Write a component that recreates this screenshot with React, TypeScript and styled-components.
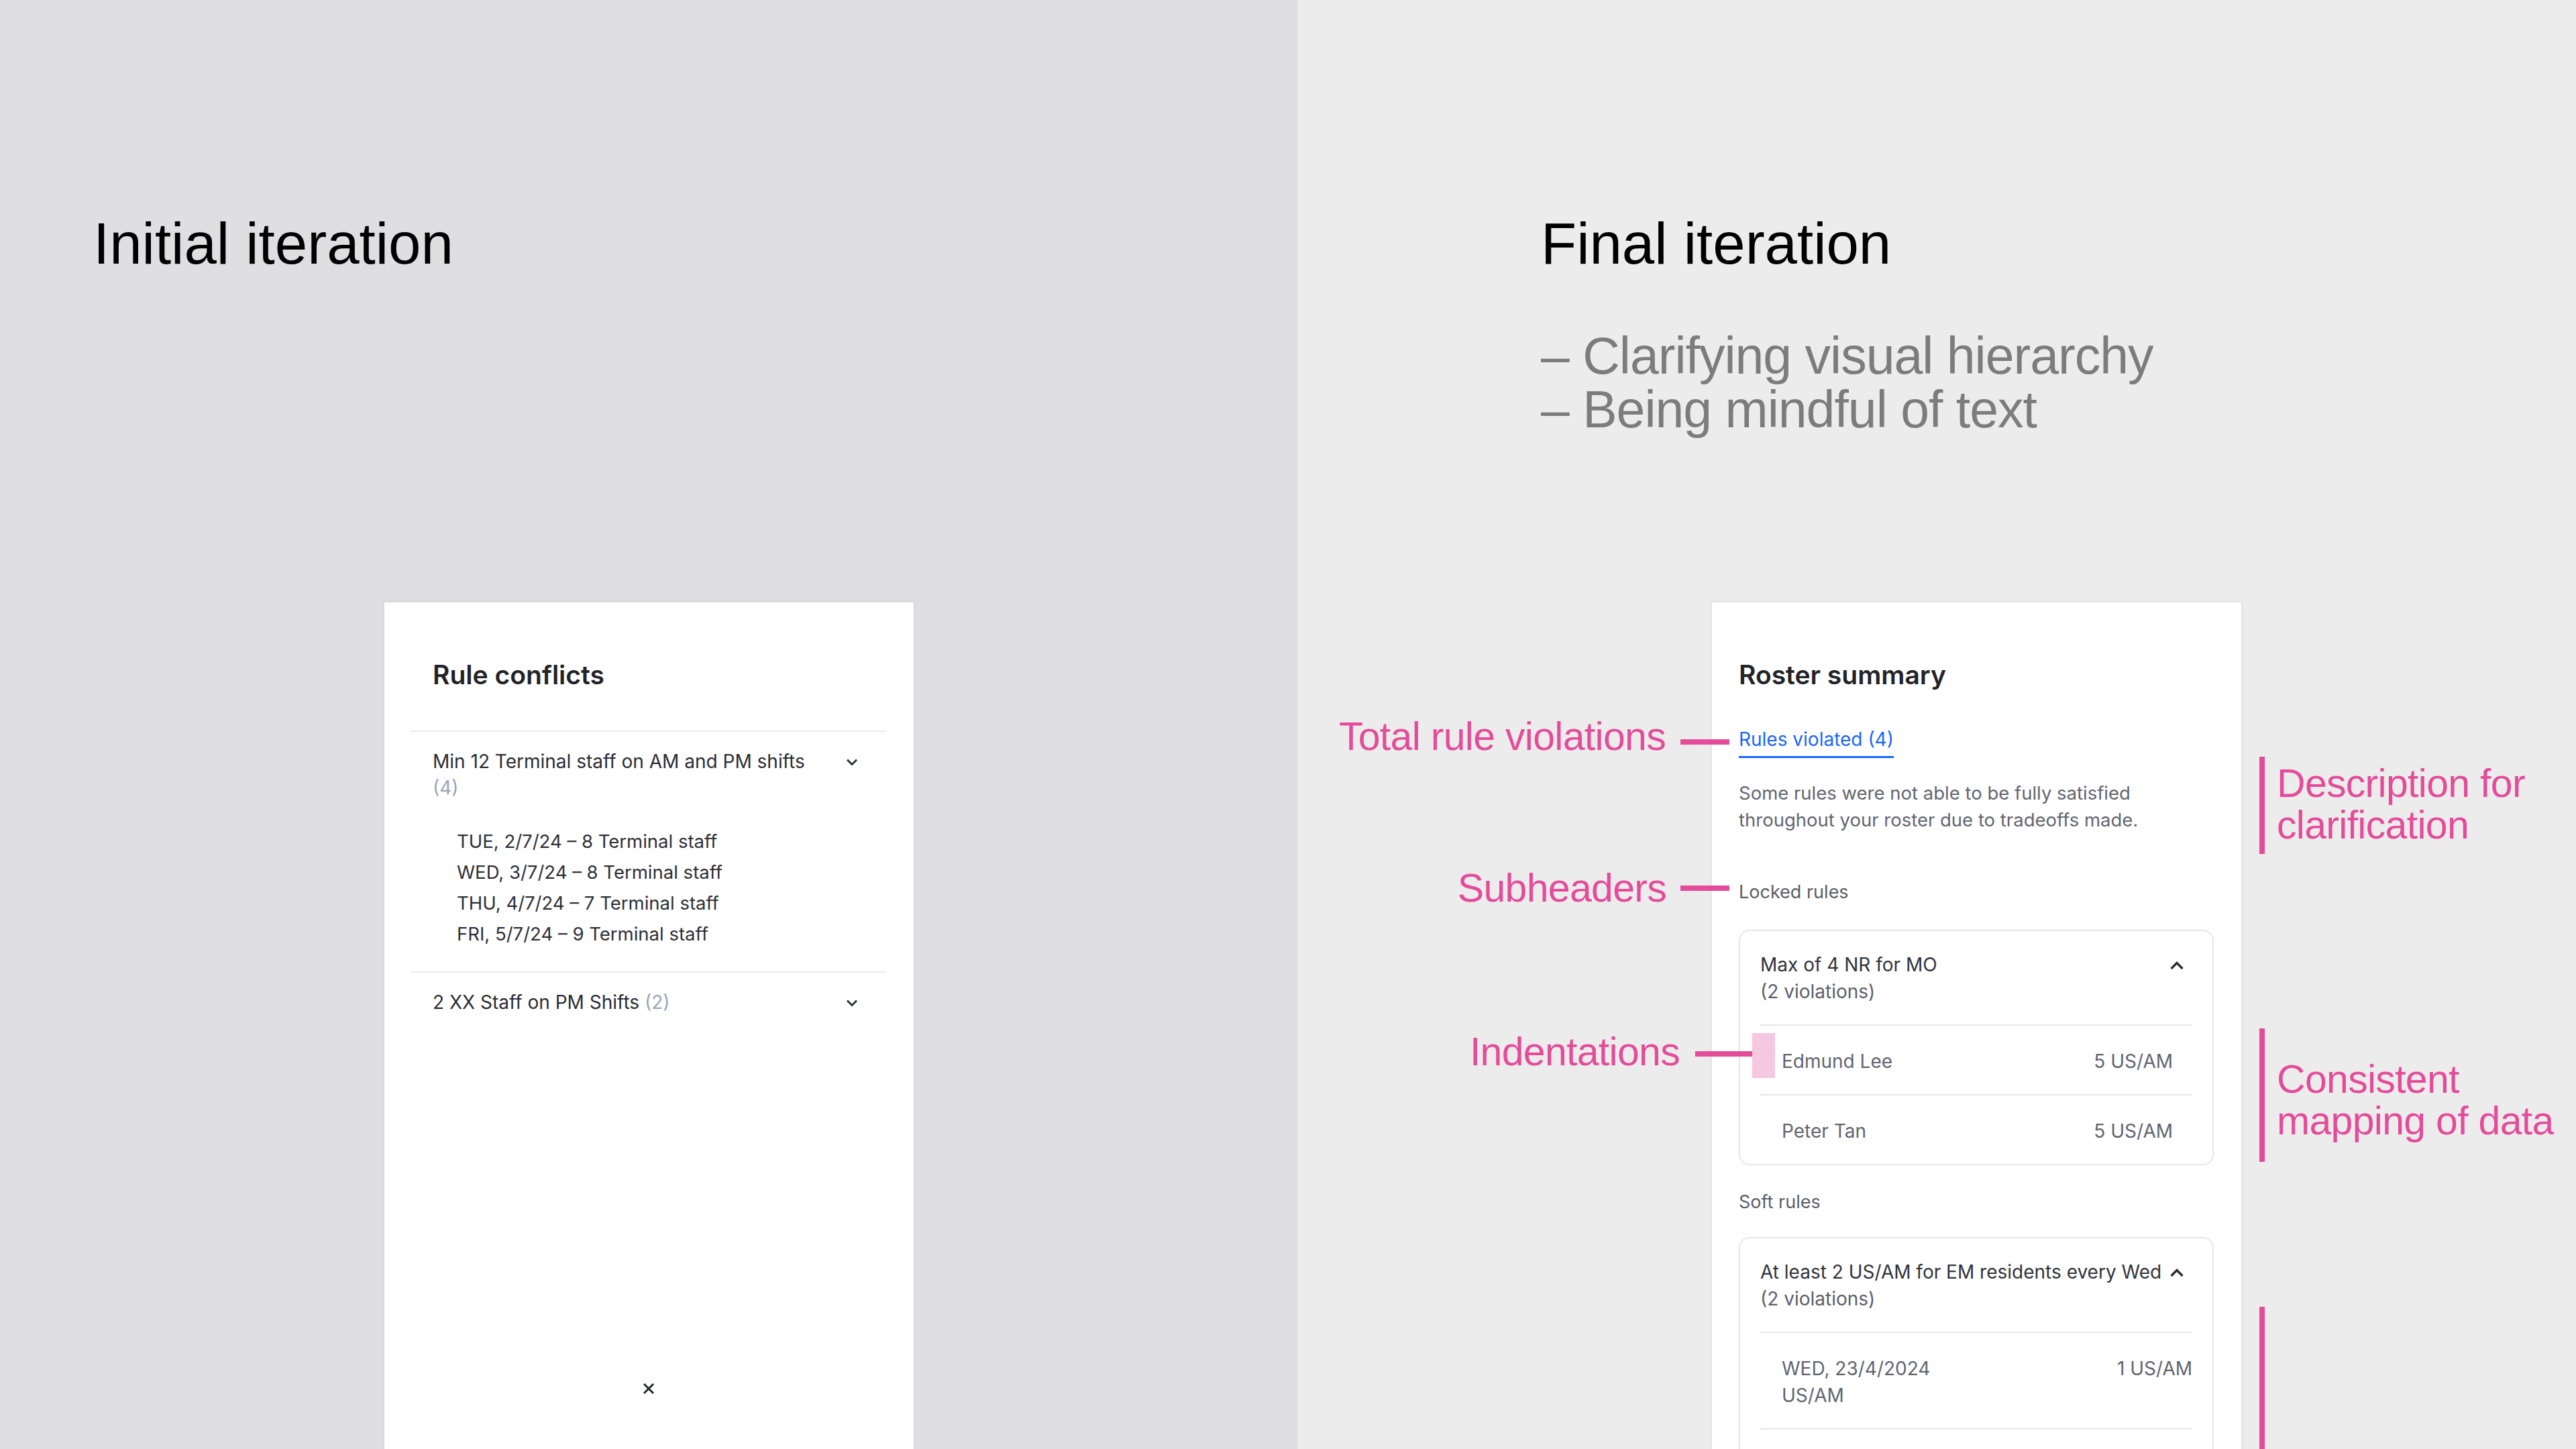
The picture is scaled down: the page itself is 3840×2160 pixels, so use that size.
import React from "react";
import styled, { createGlobalStyle } from "styled-components";

const GlobalStyle = createGlobalStyle`
  html, body { margin: 0; padding: 0; }
  body { background: #ececec; }
  * { box-sizing: border-box; }
`;

const PINK = "#e44c9a";

const Canvas = styled.div`
  width: 3840px;
  height: 2160px;
  display: flex;
  overflow: hidden;
  font-family: "Liberation Sans", Arial, sans-serif;
`;

const Panel = styled.section<{ $bg: string; $width?: number; $padLeft: number }>`
  flex: ${(p) => (p.$width ? `0 0 ${p.$width}px` : "1 1 auto")};
  background: ${(p) => p.$bg};
  padding: 319px 0 0 ${(p) => p.$padLeft}px;
  display: flex;
  flex-direction: column;
  align-items: flex-start;
  min-width: 0;
`;

const SlideTitle = styled.h1`
  margin: 0;
  font-weight: 400;
  font-size: 87px;
  line-height: 87px;
  color: #000;
  white-space: nowrap;
`;

const Takeaways = styled.ul`
  list-style: none;
  margin: 84px 0 0;
  padding: 0;
  font-size: 77px;
  line-height: 80px;
  letter-spacing: -1px;
  color: #7c7c7c;
  white-space: nowrap;
`;

const Stage = styled.div<{ $top: number; $left: number }>`
  position: relative;
  margin-top: ${(p) => p.$top}px;
  margin-left: ${(p) => p.$left}px;
`;

const Card = styled.div<{ $padLeft: number; $padRight: number }>`
  width: 789px;
  height: 1330px;
  background: #fff;
  box-shadow: 0 0 5px rgba(0, 0, 0, 0.09);
  padding: 84px ${(p) => p.$padRight}px 0 ${(p) => p.$padLeft}px;
  display: flex;
  flex-direction: column;
  font-family: Inter, "Noto Sans", sans-serif;
`;

const CardTitle = styled.h2<{ $indent: number }>`
  margin: 0;
  padding-left: ${(p) => p.$indent}px;
  font-size: 39px;
  line-height: 47px;
  font-weight: 600;
  color: #222428;
`;

/* ---------- Initial iteration (accordion) ---------- */

const Accordion = styled.div`
  margin-top: 60px;
  display: flex;
  flex-direction: column;
`;

const AccordionItem = styled.div<{ $padBottom: number }>`
  border-top: 2px solid #ececee;
  padding-bottom: ${(p) => p.$padBottom}px;
`;

const ItemHeader = styled.div`
  display: flex;
  align-items: flex-start;
  gap: 40px;
  padding: 25px 42px 0 33px;
`;

const ItemTitle = styled.div`
  flex: 1 1 auto;
  min-width: 0;
  font-size: 28px;
  line-height: 39px;
  color: #2a2d33;
`;

const Count = styled.span`
  color: #9ba4b9;
`;

const SubList = styled.ul`
  list-style: none;
  margin: 37px 0 0;
  padding: 0 0 0 69px;
  font-size: 27.5px;
  line-height: 46px;
  color: #2d3036;
`;

const Footer = styled.div`
  margin-top: auto;
  display: flex;
  justify-content: center;
  padding-bottom: 148px;
`;

const Chevron = styled.svg<{ $mt: number; $mr: number }>`
  flex: 0 0 auto;
  margin-top: ${(p) => p.$mt}px;
  margin-right: ${(p) => p.$mr}px;
  display: block;
`;

const ChevronDown = () => (
  <Chevron $mt={14} $mr={0} width="18" height="12" viewBox="0 0 18 12">
    <polyline points="2,2.5 9,9.5 16,2.5" fill="none" stroke="#2f3238" strokeWidth="3" strokeLinejoin="miter" />
  </Chevron>
);

const ChevronUp = () => (
  <Chevron $mt={14} $mr={12} width="22" height="14" viewBox="0 0 22 14">
    <polyline points="2.5,12 11,3.5 19.5,12" fill="none" stroke="#2a2d33" strokeWidth="3.4" strokeLinejoin="miter" />
  </Chevron>
);

const CloseIcon = () => (
  <svg width="20" height="20" viewBox="0 0 20 20">
    <path d="M3 3 L17 17 M17 3 L3 17" stroke="#25272b" strokeWidth="3" />
  </svg>
);

/* ---------- Final iteration (summary) ---------- */

const Tab = styled.div`
  align-self: flex-start;
  margin-top: 53px;
  font-size: 28px;
  line-height: 40px;
  color: #1766ff;
  padding-bottom: 5px;
  border-bottom: 3px solid #1766ff;
`;

const Description = styled.p`
  margin: 32px 0 0;
  max-width: 660px;
  font-size: 27.5px;
  line-height: 40px;
  color: #62666e;
`;

const SectionLabel = styled.div<{ $gap: number }>`
  margin-top: ${(p) => p.$gap}px;
  font-size: 27px;
  line-height: 40px;
  color: #5a5e66;
`;

const RuleBox = styled.div<{ $gap: number }>`
  margin-top: ${(p) => p.$gap}px;
  border: 2px solid #e7e7e9;
  border-radius: 16px;
  padding: 0 30px;
`;

const BoxHeader = styled.div`
  display: flex;
  align-items: flex-start;
  justify-content: space-between;
  gap: 12px;
  padding: 30px 0 29px;
`;

const RuleName = styled.div`
  font-size: 28px;
  line-height: 40px;
  color: #2f333b;
  white-space: nowrap;
`;

const Violations = styled.div`
  font-size: 28px;
  line-height: 40px;
  color: #5b606a;
`;

const Row = styled.div<{ $padRight: number }>`
  display: flex;
  justify-content: space-between;
  align-items: flex-start;
  border-top: 2px solid #e7e7e9;
  padding: 33px ${(p) => p.$padRight}px 29px 32px;
  font-size: 28px;
  line-height: 40px;
  color: #5f6570;
`;

const RowLabel = styled.span`
  max-width: 300px;
`;

const RowValue = styled.span`
  white-space: nowrap;
`;

/* ---------- Annotations ---------- */

const LeftCallout = styled.div<{ $top: number; $anchor: number; $gap: number }>`
  position: absolute;
  top: ${(p) => p.$top}px;
  right: calc(100% - ${(p) => p.$anchor}px);
  display: flex;
  align-items: flex-start;
  gap: ${(p) => p.$gap}px;
`;

const CalloutText = styled.div<{ $mt?: number }>`
  margin-top: ${(p) => p.$mt ?? 0}px;
  font-family: "Liberation Sans", Arial, sans-serif;
  font-size: 59px;
  line-height: 58px;
  letter-spacing: -0.7px;
  color: ${PINK};
  white-space: nowrap;
`;

const CalloutLine = styled.div<{ $width: number; $mt: number }>`
  flex: 0 0 auto;
  width: ${(p) => p.$width}px;
  height: 8px;
  margin-top: ${(p) => p.$mt}px;
  background: ${PINK};
`;

const IndentMarker = styled.div`
  position: absolute;
  left: 60px;
  top: 642px;
  width: 34px;
  height: 67px;
  background: #f5c7e1;
`;

const RightNote = styled.div<{ $top: number }>`
  position: absolute;
  top: ${(p) => p.$top}px;
  left: 816px;
  display: flex;
  align-items: flex-start;
  gap: 18px;
`;

const NoteBar = styled.div<{ $height: number }>`
  flex: 0 0 auto;
  width: 8px;
  height: ${(p) => p.$height}px;
  background: ${PINK};
`;

const NoteText = styled(CalloutText)`
  line-height: 62px;
`;

const conflicts = [
  "TUE, 2/7/24 – 8 Terminal staff",
  "WED, 3/7/24 – 8 Terminal staff",
  "THU, 4/7/24 – 7 Terminal staff",
  "FRI, 5/7/24 – 9 Terminal staff",
];

export default function App() {
  return (
    <>
      <GlobalStyle />
      <Canvas>
        <Panel $bg="#dfdfe1" $width={1934} $padLeft={139}>
          <SlideTitle>Initial iteration</SlideTitle>
          <Stage $top={492} $left={434}>
            <Card $padLeft={39} $padRight={41}>
              <CardTitle $indent={33}>Rule conflicts</CardTitle>
              <Accordion>
                <AccordionItem $padBottom={33}>
                  <ItemHeader>
                    <ItemTitle>
                      Min 12 Terminal staff on AM and PM shifts <Count>(4)</Count>
                    </ItemTitle>
                    <ChevronDown />
                  </ItemHeader>
                  <SubList>
                    {conflicts.map((c) => (
                      <li key={c}>{c}</li>
                    ))}
                  </SubList>
                </AccordionItem>
                <AccordionItem $padBottom={25}>
                  <ItemHeader>
                    <ItemTitle>
                      2 XX Staff on PM Shifts <Count>(2)</Count>
                    </ItemTitle>
                    <ChevronDown />
                  </ItemHeader>
                </AccordionItem>
              </Accordion>
              <Footer>
                <CloseIcon />
              </Footer>
            </Card>
          </Stage>
        </Panel>

        <Panel $bg="#ececec" $padLeft={363}>
          <SlideTitle>Final iteration</SlideTitle>
          <Takeaways>
            <li>– Clarifying visual hierarchy</li>
            <li>– Being mindful of text</li>
          </Takeaways>
          <Stage $top={248} $left={255}>
            <Card $padLeft={40} $padRight={41}>
              <CardTitle $indent={0}>Roster summary</CardTitle>
              <Tab>Rules violated (4)</Tab>
              <Description>
                Some rules were not able to be fully satisfied throughout your roster due to tradeoffs made.
              </Description>
              <SectionLabel $gap={68}>Locked rules</SectionLabel>
              <RuleBox $gap={36}>
                <BoxHeader>
                  <div>
                    <RuleName>Max of 4 NR for MO</RuleName>
                    <Violations>(2 violations)</Violations>
                  </div>
                  <ChevronUp />
                </BoxHeader>
                <Row $padRight={29}>
                  <RowLabel>Edmund Lee</RowLabel>
                  <RowValue>5 US/AM</RowValue>
                </Row>
                <Row $padRight={29}>
                  <RowLabel>Peter Tan</RowLabel>
                  <RowValue>5 US/AM</RowValue>
                </Row>
              </RuleBox>
              <SectionLabel $gap={35}>Soft rules</SectionLabel>
              <RuleBox $gap={32}>
                <BoxHeader>
                  <div>
                    <RuleName>At least 2 US/AM for EM residents every Wed</RuleName>
                    <Violations>(2 violations)</Violations>
                  </div>
                  <ChevronUp />
                </BoxHeader>
                <Row $padRight={0}>
                  <RowLabel>WED, 23/4/2024 US/AM</RowLabel>
                  <RowValue>1 US/AM</RowValue>
                </Row>
                <Row $padRight={0}>
                  <RowLabel>WED, 30/4/2024 US/AM</RowLabel>
                  <RowValue>1 US/AM</RowValue>
                </Row>
              </RuleBox>
            </Card>

            <LeftCallout $top={171} $anchor={26} $gap={22}>
              <CalloutText>Total rule violations</CalloutText>
              <CalloutLine $width={73} $mt={33} />
            </LeftCallout>
            <LeftCallout $top={397} $anchor={26} $gap={21}>
              <CalloutText>Subheaders</CalloutText>
              <CalloutLine $width={73} $mt={25} />
            </LeftCallout>
            <LeftCallout $top={641} $anchor={60} $gap={23}>
              <CalloutText>Indentations</CalloutText>
              <CalloutLine $width={85} $mt={28} />
            </LeftCallout>
            <IndentMarker />

            <RightNote $top={230}>
              <NoteBar $height={145} />
              <NoteText $mt={9}>
                Description for
                <br />
                clarification
              </NoteText>
            </RightNote>
            <RightNote $top={635}>
              <NoteBar $height={199} />
              <NoteText $mt={45}>
                Consistent
                <br />
                mapping of data
              </NoteText>
            </RightNote>
            <RightNote $top={1050}>
              <NoteBar $height={220} />
            </RightNote>
          </Stage>
        </Panel>
      </Canvas>
    </>
  );
}
